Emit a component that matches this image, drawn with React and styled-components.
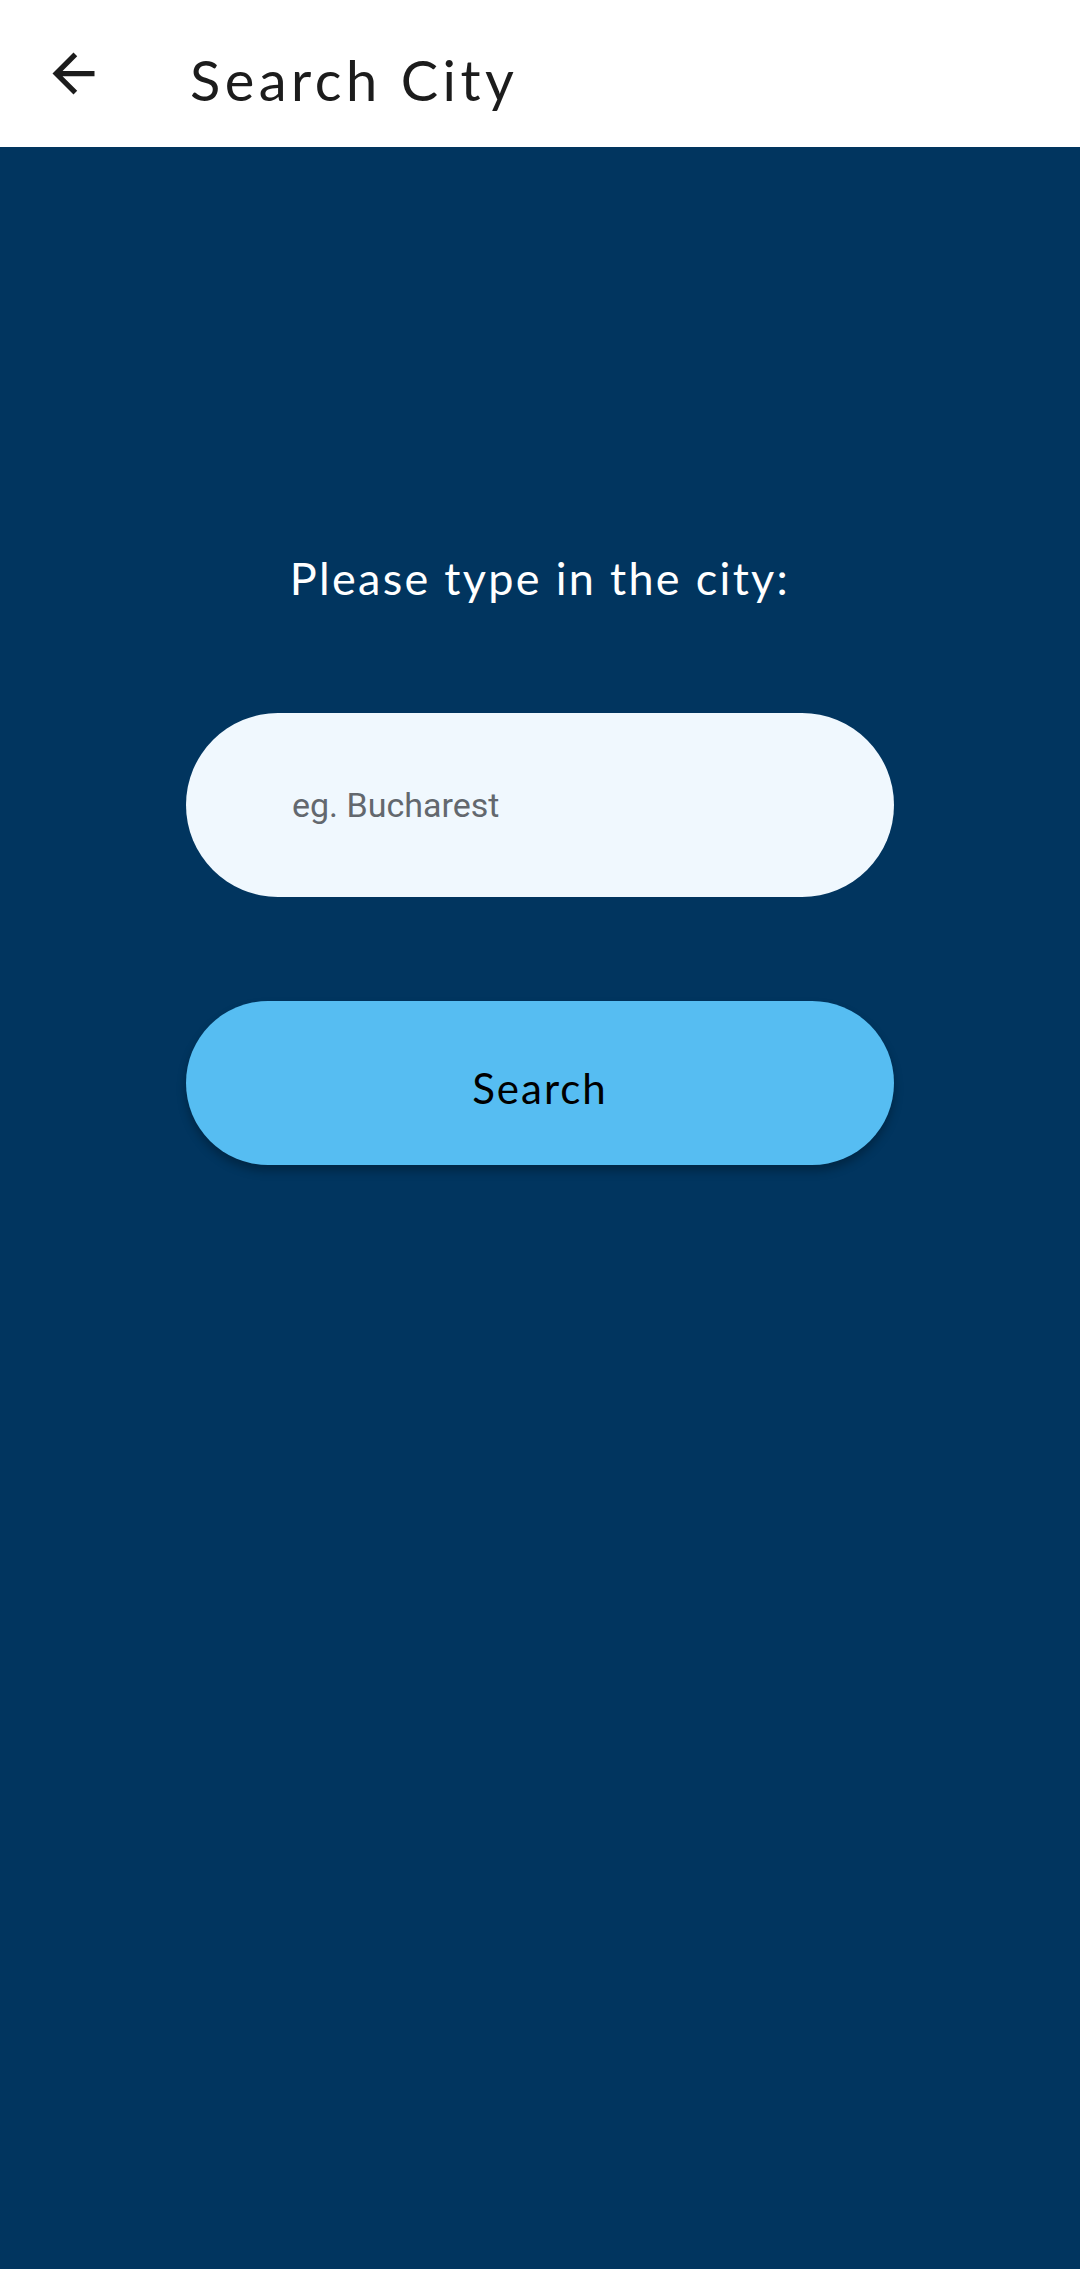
import React from "react";
import styled, { createGlobalStyle } from "styled-components";

const Global = createGlobalStyle`
  html, body { margin: 0; padding: 0; }
  body { background: #01355f; font-family: "Lato", "Open Sans", sans-serif; }
  #root { min-height: 2269px; display: flex; flex-direction: column; }
`;

const Screen = styled.div`
  flex: 1;
  display: flex;
  flex-direction: column;
  min-height: 2269px;
  background: #01355f;
`;

const AppBar = styled.header`
  height: 147px;
  background: #ffffff;
  display: flex;
  align-items: center;
  flex-shrink: 0;
`;

const IconButton = styled.button`
  width: 63px;
  height: 63px;
  margin-left: 42px;
  padding: 0;
  border: none;
  background: transparent;
  display: flex;
  align-items: center;
  justify-content: center;
  cursor: pointer;
`;

const Title = styled.h1`
  margin: 0 0 0 85px;
  padding-top: 12px;
  font-family: "Lato", "Open Sans", sans-serif;
  font-weight: 400;
  font-size: 56px;
  letter-spacing: 4.5px;
  color: #1c1c1c;
  line-height: 1;
`;

const Body = styled.main`
  display: flex;
  flex-direction: column;
  align-items: center;
  padding-top: 406px;
`;

const Prompt = styled.p`
  margin: 0;
  height: 50px;
  line-height: 50px;
  font-family: "Lato", "Open Sans", sans-serif;
  font-size: 45px;
  letter-spacing: 2.3px;
  color: #ffffff;
`;

const Field = styled.input`
  box-sizing: border-box;
  margin-top: 110px;
  width: 708px;
  height: 184px;
  border: none;
  outline: none;
  border-radius: 92px;
  background: #f0f8fe;
  padding: 0 0 0 106px;
  font-family: "Roboto", sans-serif;
  font-size: 34px;
  color: #333;
  &::placeholder {
    color: #63686e;
  }
`;

const PillButton = styled.button`
  box-sizing: border-box;
  margin-top: 104px;
  width: 708px;
  height: 164px;
  padding: 10px 0 0;
  border: none;
  border-radius: 82px;
  background: #56bdf2;
  box-shadow: 0 6px 10px rgba(0, 0, 0, 0.28);
  font-family: "Lato", "Open Sans", sans-serif;
  font-size: 42px;
  letter-spacing: 2px;
  color: #000000;
  cursor: pointer;
`;

function BackArrow() {
  return (
    <svg width="63" height="63" viewBox="0 0 24 24" fill="#1c1c1c">
      <path d="M20 11H7.83l5.59-5.59L12 4l-8 8 8 8 1.41-1.41L7.83 13H20v-2z" />
    </svg>
  );
}

export default function App() {
  return (
    <>
      <Global />
      <Screen>
        <AppBar>
          <IconButton aria-label="Back">
            <BackArrow />
          </IconButton>
          <Title>Search City</Title>
        </AppBar>
        <Body>
          <Prompt>Please type in the city:</Prompt>
          <Field placeholder="eg. Bucharest" />
          <PillButton>Search</PillButton>
        </Body>
      </Screen>
    </>
  );
}
